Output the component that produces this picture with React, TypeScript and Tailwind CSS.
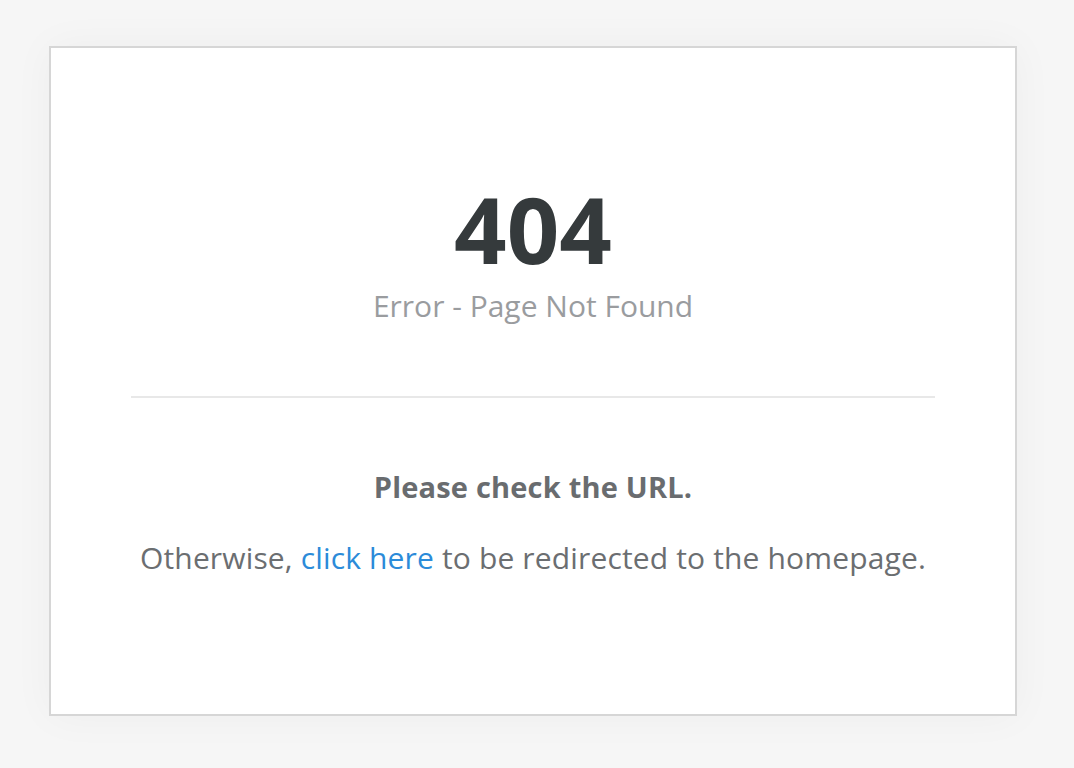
export default function App() {
  return (
    <div className="min-h-screen w-full bg-[#f6f6f6] pt-[46px] pl-[49px] font-['Open_Sans',sans-serif]">
      <div className="w-[968px] h-[670px] bg-white border-2 border-[#d6d6d6] shadow-[0_0_40px_rgba(0,0,0,0.04)] flex flex-col px-[80px]">
        <div className="pt-[135px] flex flex-col items-center">
          <h1 className="text-[92px] leading-[92px] font-bold text-[#353a3c]">404</h1>
          <p className="mt-[13px] text-[30px] leading-[36px] text-[#9a9c9f]">Error - Page Not Found</p>
        </div>
        <div className="mt-[72px] h-[2px] bg-[#e8e8e8]" />
        <div className="pt-[71px] flex flex-col items-center">
          <p className="text-[29px] leading-[36px] font-bold tracking-[0.2px] text-[#696c6f]">Please check the URL.</p>
          <p className="mt-[35px] text-[30px] leading-[36px] tracking-[0.15px] text-[#6b6e71]">
            Otherwise, <a href="#" className="text-[#2b8bd9]">click here</a> to be redirected to the homepage.
          </p>
        </div>
      </div>
    </div>
  );
}
